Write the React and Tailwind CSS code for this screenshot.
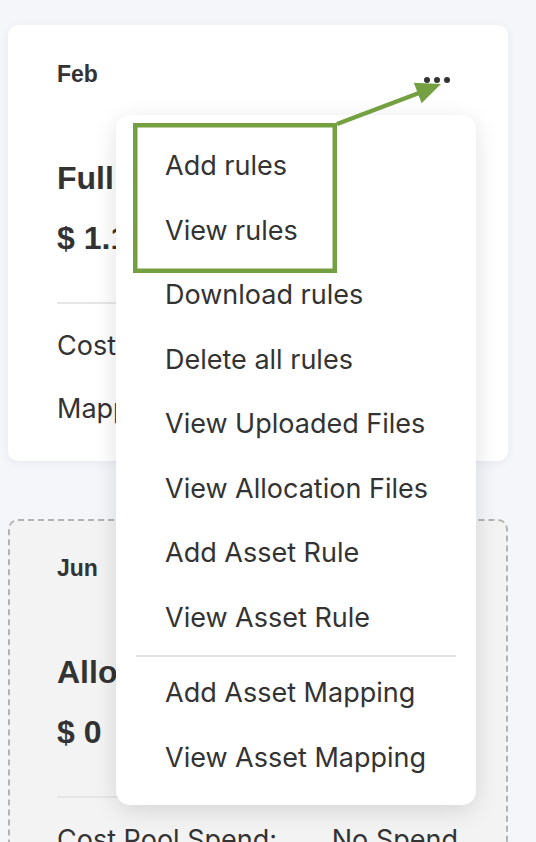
import React from "react";

const menuTop = ["Add rules", "View rules", "Download rules", "Delete all rules", "View Uploaded Files", "View Allocation Files", "Add Asset Rule", "View Asset Rule"];
const menuBottom = ["Add Asset Mapping", "View Asset Mapping"];

const MonthCard = ({ month, title, amount, rows, dashed }) => {
  return (
    <div
      className={
        dashed
          ? "w-[500px] rounded-[10px] border-2 border-dashed border-[#b3b3b3] bg-[#f3f3f3] pl-[47px] pr-[48px] pt-[33px] pb-[36px]"
          : "w-[500px] rounded-[10px] bg-white pl-[49px] pr-[50px] pt-[35px] pb-[36px] shadow-[0_2px_10px_rgba(30,40,90,0.06)]"
      }
    >
      <div className="flex items-start justify-between">
        <span className="font-['Liberation_Sans',Arial,sans-serif] text-[23px] font-bold leading-[28px] text-[#333]">{month}</span>
        {!dashed && (
          <svg width="26" height="28" className="mr-[8px]" viewBox="0 0 26 28">
            <circle cx="3" cy="20" r="3" fill="#333" />
            <circle cx="13" cy="20" r="3" fill="#333" />
            <circle cx="23" cy="20" r="3" fill="#333" />
          </svg>
        )}
      </div>
      <div className="mt-[70px] font-['Liberation_Sans',Arial,sans-serif] text-[32px] font-bold leading-[40px] text-[#333] whitespace-nowrap">{title}</div>
      <div className="mt-[20px] font-['Liberation_Sans',Arial,sans-serif] text-[32px] font-bold leading-[40px] text-[#333] whitespace-nowrap">{amount}</div>
      <div className="mt-[44px] h-[2px] bg-[#e6e6e6]" />
      <div className="font-['Inter',sans-serif] text-[27px] leading-[32px] text-[#333]">
        {rows.map((r, i) => (
          <div key={i} className={i === 0 ? "mt-[26px] flex justify-between whitespace-nowrap" : "mt-[31px] flex justify-between whitespace-nowrap"}>
            <span>{r[0]}</span>
            <span>{r[1]}</span>
          </div>
        ))}
      </div>
    </div>
  );
};

export default function App() {
  return (
    <div className="relative h-[842px] w-[536px] overflow-hidden bg-[#f5f6fa]">
      <div className="flex flex-col gap-[58px] pl-2 pt-[25px]">
        <MonthCard
          month="Feb"
          title="Full Allocation"
          amount="$ 1.1M"
          rows={[["Cost Pool Spend:", "$ 1.1M"], ["Mapping Status:", "Done"]]}
        />
        <MonthCard
          dashed
          month="Jun"
          title="Allocation Pending"
          amount="$ 0"
          rows={[["Cost Pool Spend:", "No Spend"], ["Mapping Status:", "Pending"]]}
        />
      </div>

      {/* dropdown menu */}
      <div className="absolute left-[116px] top-[115px] w-[360px] rounded-[14px] bg-white pt-[19px] pb-[15px] shadow-[0_6px_24px_rgba(0,0,0,0.12)] font-['Inter',sans-serif] text-[27px] text-[#333]">
        {menuTop.map((t) => (
          <div key={t} className="flex h-[64.5px] items-center pl-[49px] whitespace-nowrap">{t}</div>
        ))}
        <div className="mx-[20px] mt-[5px] mb-[4px] h-[2px] bg-[#e4e4e4]" />
        {menuBottom.map((t) => (
          <div key={t} className="flex h-[64.5px] items-center pl-[49px] whitespace-nowrap">{t}</div>
        ))}
      </div>

      {/* annotation */}
      <svg className="pointer-events-none absolute left-0 top-0" width="536" height="842">
        <rect x="135.25" y="125.25" width="199.5" height="145.5" fill="none" stroke="#75a042" strokeWidth="4.5" />
        <line x1="337" y1="124" x2="419" y2="93" stroke="#75a042" strokeWidth="4.5" />
        <polygon points="441,84 413.8,82.7 421.6,103.3" fill="#75a042" />
      </svg>
    </div>
  );
}
